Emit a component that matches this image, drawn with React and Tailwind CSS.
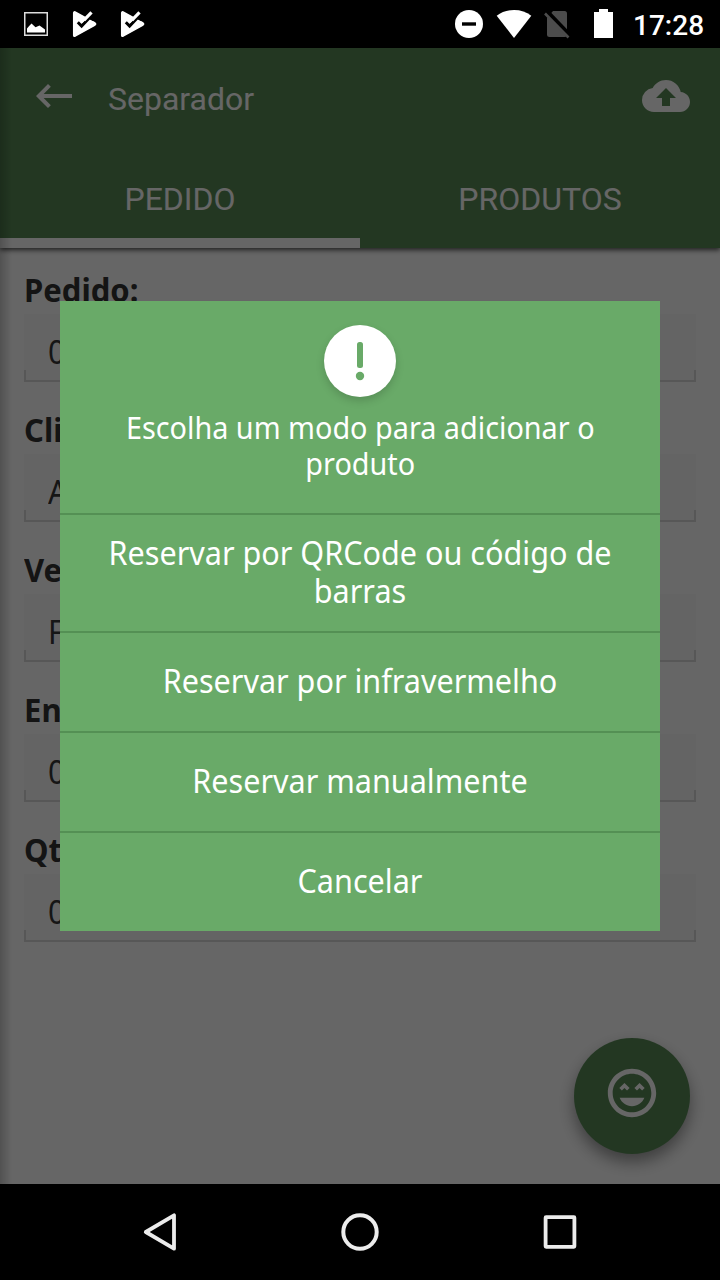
import React from 'react';
import { MdKeyboardBackspace, MdCloudUpload } from 'react-icons/md';

const fields = [
  { label: 'Pedido:', value: '0' },
  { label: 'Cli', value: 'A' },
  { label: 'Ve', value: 'F' },
  { label: 'En', value: '0' },
  { label: 'Qt', value: '0' },
];

const options = [
  ['Reservar por QRCode ou código de', 'barras'],
  ['Reservar por infravermelho'],
  ['Reservar manualmente'],
  ['Cancelar'],
];

function PlayCheck() {
  return (
    <svg className="w-12 h-12" viewBox="0 0 48 48">
      <path
        d="M15 12 34.5 22.6Q36.800 24 34.500 25.400L15 36.200Q13.700 36.700 13.700 35.200V13Q13.700 11.500 15 12Z"
        fill="#fff"
        stroke="#fff"
        strokeWidth="1.500"
        strokeLinejoin="round"
      />
      <path d="M26 17.500 33.500 9.500 39 18.500 33 21Z" fill="#000" />
      <path d="M17.800 22.300 21.600 26 29 18.300" fill="none" stroke="#000" strokeWidth="3" />
      <path d="M24 20.200 31.500 12.300" fill="none" stroke="#fff" strokeWidth="3.200" />
      <path d="M20 18.800 22.300 21.300 25 18.800" fill="none" stroke="#fff" strokeWidth="2.400" />
    </svg>
  );
}

function StatusBar() {
  return (
    <div className="flex h-12 items-center justify-between bg-black pl-3 pr-4">
      <div className="flex">
        <svg className="w-12 h-12" viewBox="0 0 48 48">
          <rect x="12.750" y="12.750" width="22.500" height="22.500" fill="none" stroke="#ddd" strokeWidth="1.500" />
          <path d="M15 32.500V28.500Q17 26 19.500 23.500L23.500 27.200 27.500 25.500 33 29.500V32.500Z" fill="#fff" />
        </svg>
        <PlayCheck />
        <PlayCheck />
      </div>
      <div className="flex items-center">
        <svg className="h-12 w-[48px]" viewBox="0 0 48 48">
          <circle cx="24" cy="24" r="14" fill="#fff" />
          <rect x="17" y="22.300" width="14" height="3.400" fill="#000" />
        </svg>
        <svg className="h-12 w-[42px]" viewBox="0 0 42 48">
          <path d="M21 38 3.700 15.800Q11 10 21 10T38.300 15.800Z" fill="#fff" />
        </svg>
        <svg className="h-12 w-[44px]" viewBox="0 0 44 48">
          <path d="M18 11H29.500Q32 11 32 13.500V34.500Q32 37 29.500 37H14.500Q12 37 12 34.500V18Z" fill="#4c4c4c" />
          <path d="M11.500 11.500 35.500 36.500" stroke="#000" strokeWidth="5" />
          <path d="M10 13.500 33.500 37.500" stroke="#4c4c4c" strokeWidth="2.600" />
        </svg>
        <svg className="h-12 w-[50px]" viewBox="0 0 50 48">
          <path d="M20 9H29V12H34V38H15V12H20Z" fill="#fff" />
        </svg>
        <span className="ml-1 w-[71px] whitespace-nowrap pt-[3px] font-['Roboto',sans-serif] text-[28px] leading-8 font-medium text-white">
          17:28
        </span>
      </div>
    </div>
  );
}

function Header() {
  return (
    <header className="relative h-[200px] shrink-0 bg-[#588b56] font-['Roboto',sans-serif] text-[32px] leading-10 text-white shadow-[0_2px_5px_rgba(0,0,0,0.7)]">
      <div className="flex h-24 items-center pr-[30px] pl-[30px]">
        <MdKeyboardBackspace size={48} />
        <span className="ml-[30px] grow pt-[5px]">Separador</span>
        <MdCloudUpload size={48} />
      </div>
      <div className="mt-4 grid grid-cols-2 text-center">
        <div className="flex h-[88px] flex-col border-b-10 border-white">
          <span className="m-auto">PEDIDO</span>
        </div>
        <div className="flex h-[78px] flex-col">
          <span className="m-auto">PRODUTOS</span>
        </div>
      </div>
    </header>
  );
}

function Field({ label, value }) {
  return (
    <div className="mb-[26px]">
      <div className="mb-[2px] h-11 origin-left scale-x-[0.97] text-[32px] leading-[44px] font-bold text-[#333]">
        {label}
      </div>
      <div className="flex h-[68px] flex-col bg-[#fbfbfb]">
        <div className="h-14 pt-1 pl-6 text-[33px] leading-[68px] text-[#383838]">
          <span className="inline-block origin-left scale-x-[0.93]">{value}</span>
        </div>
        <div className="h-3 border-2 border-t-0 border-[#dadada]" />
      </div>
    </div>
  );
}

function Dialog() {
  return (
    <div className="w-[600px] bg-[#69aa68] text-center text-white">
      <div className="flex h-[214px] flex-col items-center border-b-2 border-[#549054] pt-6">
        <div className="h-[72px] w-[72px] shrink-0 rounded-full bg-white shadow-[0_4px_8px_rgba(0,0,0,0.16)]">
          <svg viewBox="0 0 72 72" fill="#69aa68">
            <rect x="33" y="17" width="6" height="26" rx="2.500" />
            <circle cx="36" cy="51" r="4.200" />
          </svg>
        </div>
        <div className="mt-3 scale-x-[0.929] text-[31px] leading-9 whitespace-nowrap">
          Escolha um modo para adicionar o<br />
          produto
        </div>
      </div>
      {options.map((lines, i) => (
        <div
          key={lines[0]}
          className={
            'flex flex-col justify-center pb-[2px] text-[33px] leading-[38px] whitespace-nowrap border-[#549054] ' +
            (lines.length > 1 ? 'h-[118px] ' : i === options.length - 1 ? 'h-[98px] ' : 'h-[100px] ') +
            (i < options.length - 1 ? 'border-b-2' : '')
          }
        >
          {lines.map((line) => (
            <span key={line} className="scale-x-[0.926]">
              {line}
            </span>
          ))}
        </div>
      ))}
    </div>
  );
}

function NavBar() {
  return (
    <div className="grid h-24 grid-cols-3 items-center justify-items-center bg-black px-[60px]">
      <svg className="h-12 w-12" viewBox="0 0 48 48" fill="none" stroke="#ececec" strokeWidth="3.800" strokeLinejoin="round">
        <path d="M9.800 24 38 7.300V40.700Z" />
      </svg>
      <svg className="h-12 w-12" viewBox="0 0 48 48" fill="none" stroke="#ececec" strokeWidth="4">
        <circle cx="24" cy="24" r="16.700" />
      </svg>
      <svg className="h-12 w-12" viewBox="0 0 48 48" fill="none" stroke="#ececec" strokeWidth="3.800" strokeLinejoin="round">
        <rect x="9.600" y="9.200" width="28.800" height="29.600" rx="0.500" />
      </svg>
    </div>
  );
}

export default function App() {
  return (
    <div className="flex h-[1280px] w-[720px] flex-col overflow-hidden font-['Noto_Sans',sans-serif]">
      <StatusBar />
      <div className="relative flex h-[1136px] flex-col overflow-hidden bg-white">
        <Header />
        <main className="px-6 pt-5">
          {fields.map((f, i) => (
            <Field key={i} label={f.label} value={f.value} />
          ))}
        </main>
        <div className="absolute right-[30px] bottom-[30px] flex h-[116px] w-[116px] justify-center rounded-full bg-[#588b56] pt-[26px] shadow-[0_8px_16px_rgba(0,0,0,0.4)]">
          <svg className="h-[58px] w-[58px]" viewBox="0 0 24 24" fill="#fff">
            <path d="M12 2C6.470 2 2 6.500 2 12S6.470 22 12 22 22 17.500 22 12 17.500 2 12 2M12 20C7.580 20 4 16.420 4 12S7.580 4 12 4 20 7.580 20 12 16.420 20 12 20M13 9.940L14.060 11L15.120 9.940L16.180 11L17.240 9.940L15.120 7.820L13 9.940M8.880 9.940L9.940 11L11 9.940L8.880 7.820L6.760 9.940L7.820 11L8.880 9.940M12 17.500C14.330 17.500 16.310 16.040 17.110 14H6.890C7.690 16.040 9.670 17.500 12 17.500Z" />
          </svg>
        </div>
        <div className="absolute inset-y-0 left-0 w-3 bg-gradient-to-r from-black/20 to-transparent" />
        <div className="absolute inset-0 flex flex-col items-center bg-black/60 pt-[253px]">
          <Dialog />
        </div>
      </div>
      <NavBar />
    </div>
  );
}
